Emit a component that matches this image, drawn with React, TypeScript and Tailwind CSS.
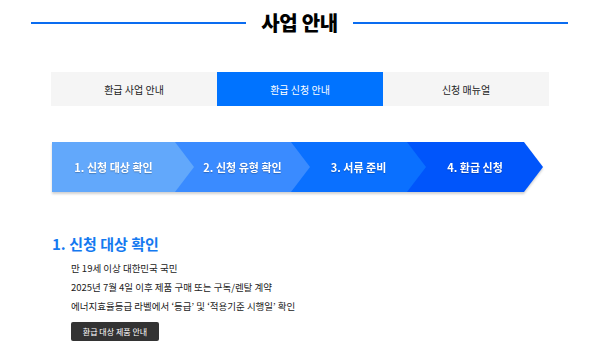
import React from 'react';

const font = { fontFamily: '"Noto Sans CJK KR", "Noto Sans", sans-serif' };

const tabs = [
  { label: '환급 사업 안내', active: false },
  { label: '환급 신청 안내', active: true },
  { label: '신청 매뉴얼', active: false },
];

const steps = [
  { label: '1. 신청 대상 확인', cls: 'bg-[#62a8fb] z-40 w-[142px] pl-0' },
  { label: '2. 신청 유형 확인', cls: 'bg-[#3a8bff] z-30 w-[135px] pl-[19px] -ml-[19px]' },
  { label: '3. 서류 준비', cls: 'bg-[#0a70ff] z-20 w-[135px] pl-[19px] -ml-[19px]' },
  { label: '4. 환급 신청', cls: 'bg-[#0055fb] z-10 w-[136px] pl-[19px] -ml-[19px]' },
];

const items = [
  '만 19세 이상 대한민국 국민',
  '2025년 7월 4일 이후 제품 구매 또는 구독/렌탈 계약',
  '에너지효율등급 라벨에서 ‘등급’ 및 ‘적용기준 시행일’ 확인',
];

export default function App() {
  return (
    <div className="w-[600px] h-[351px] bg-white overflow-hidden" style={font}>
      {/* section title */}
      <div className="flex items-center pl-[31px] pr-[32px] pt-[10px]">
        <div className="flex-1 h-[2px] bg-[#0a6cf0]" />
        <h2 className="px-[15px] text-[20px] leading-[25px] font-black text-black tracking-[-0.3px]">사업 안내</h2>
        <div className="flex-1 h-[2px] bg-[#0a6cf0]" />
      </div>

      {/* tabs */}
      <div className="mx-[51px] mt-[37px] grid grid-cols-3 h-[34px]">
        {tabs.map((t) => (
          <div
            key={t.label}
            className={
              'flex items-center justify-center text-[10px] ' +
              (t.active ? 'bg-[#0073ff] text-white' : 'bg-[#f5f5f5] text-[#222]')
            }
          >
            {t.label}
          </div>
        ))}
      </div>

      {/* steps */}
      <div className="ml-[52px] mt-[36px] flex h-[50px] drop-shadow-[0_2px_1px_rgba(0,0,0,0.18)]">
        {steps.map((s) => (
          <div
            key={s.label}
            className={'relative flex items-center pr-[19px] text-white text-[11px] font-bold [clip-path:polygon(0_0,calc(100%-19px)_0,100%_50%,calc(100%-19px)_100%,0_100%)] ' + s.cls}
          >
            <span className="flex-1 text-center [text-shadow:0_1px_1px_rgba(0,0,0,0.25)]">{s.label}</span>
          </div>
        ))}
      </div>

      {/* content */}
      <div className="px-[52px] mt-[43px]">
        <h3 className="text-[15px] leading-[18px] font-bold text-[#1479f0]">1. 신청 대상 확인</h3>
        <ul className="ml-[19px] mt-[6px] flex flex-col text-[9.5px] leading-[19px] text-[#222]">
          {items.map((i) => (
            <li key={i}>{i}</li>
          ))}
        </ul>
        <button className="ml-[19px] mt-[6px] h-[19px] w-[88px] rounded-[2px] bg-[#333] text-white text-[8px] flex items-center justify-center">
          환급 대상 제품 안내
        </button>
      </div>
    </div>
  );
}
